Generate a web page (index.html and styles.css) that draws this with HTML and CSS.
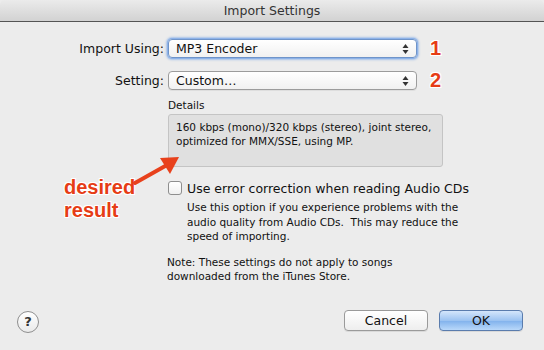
FILE: index.html
```html
<!DOCTYPE html>
<html>
<head>
<meta charset="utf-8">
<link rel="stylesheet" href="styles.css">
</head>
<body>
<div class="dialog">
  <div class="titlebar">Import Settings</div>
  <div class="content">
    <div class="form">
      <div class="label">Import Using:</div>
      <div class="popup focused"><span>MP3 Encoder</span><span class="updown"><svg width="7" height="12" viewBox="0 0 7 12"><path d="M3.5 1 L6.5 5 H0.5 Z M3.5 11 L6.5 7 H0.5 Z" fill="#333"/></svg></span></div>
      <div class="num">1</div>
      <div class="label">Setting:</div>
      <div class="popup"><span>Custom…</span><span class="updown"><svg width="7" height="12" viewBox="0 0 7 12"><path d="M3.5 1 L6.5 5 H0.5 Z M3.5 11 L6.5 7 H0.5 Z" fill="#333"/></svg></span></div>
      <div class="num">2</div>
    </div>
    <div class="details">
      <div class="details-label">Details</div>
      <div class="details-box">160 kbps (mono)/320 kbps (stereo), joint stereo,<br>optimized for MMX/SSE, using MP.</div>
    </div>
    <div class="option">
      <div class="check-row"><span class="checkbox"></span><span class="check-label">Use error correction when reading Audio CDs</span></div>
      <div class="option-desc">Use this option if you experience problems with the<br>audio quality from Audio CDs.&nbsp; This may reduce the<br>speed of importing.</div>
    </div>
    <div class="note">Note: These settings do not apply to songs<br>downloaded from the iTunes Store.</div>
  </div>
  <div class="footer">
    <div class="help">?</div>
    <div class="buttons">
      <div class="btn">Cancel</div>
      <div class="btn default">OK</div>
    </div>
  </div>
  <div class="annotation">desired<br>result</div>
  <svg class="arrow" width="60" height="40" viewBox="0 0 60 40">
    <path d="M8 29 L40 11" stroke="#e8411c" stroke-width="4" stroke-linecap="round" fill="none"/>
    <path d="M52 3 L33 4 L43 20 Z" fill="#e8411c"/>
  </svg>
</div>
</body>
</html>
```
FILE: styles.css
```css
* { box-sizing: border-box; }
html, body { margin: 0; padding: 0; }
body {
  width: 544px;
  height: 350px;
  background: #ececec;
  font-family: "DejaVu Sans", "Liberation Sans", sans-serif;
  color: #111;
  overflow: hidden;
}
.dialog {
  position: relative;
  width: 544px;
  height: 350px;
  background: #ececec;
  display: flex;
  flex-direction: column;
}
.titlebar {
  height: 22px;
  line-height: 22px;
  text-align: center;
  font-size: 12.5px;
  color: #333;
  background: linear-gradient(#ebebeb, #d2d2d2);
  border-bottom: 1px solid #545454;
  border-radius: 5px 5px 0 0;
}
.content {
  flex: 1;
  padding-top: 17px;
}
.form {
  display: grid;
  grid-template-columns: 168px 249px 1fr;
  row-gap: 13px;
  align-items: center;
}
.label {
  text-align: right;
  padding-right: 4px;
  font-size: 12.5px;
}
.popup {
  height: 19px;
  border: 1px solid #9c9c9c;
  border-radius: 4px;
  background: linear-gradient(#ffffff, #f1f1f1);
  font-size: 12.5px;
  display: flex;
  align-items: center;
  justify-content: space-between;
  padding: 0 7px 0 7px;
  box-shadow: 0 1px 0 rgba(0,0,0,0.06);
}
.popup.focused {
  border-color: #6f94c9;
  box-shadow: 0 0 0 1px #8db2e8, 0 0 2px 2px rgba(120,165,230,0.6);
}
.updown { display: flex; align-items: center; }
.num {
  padding-left: 13px;
  font-family: "Liberation Sans", sans-serif;
  font-weight: bold;
  font-size: 20px;
  color: #e63c15;
  text-shadow: 1px 1px 0 #fff, -1px -1px 0 #fff, 1px -1px 0 #fff, -1px 1px 0 #fff;
  line-height: 19px;
}
.details {
  margin: 9px 0 0 168px;
  width: 275px;
}
.details-label {
  font-size: 10.5px;
  line-height: 13px;
  margin-bottom: 2px;
}
.details-box {
  height: 53px;
  background: #e0e0e0;
  border: 1px solid #c4c4c4;
  border-radius: 3px;
  font-size: 10.5px;
  line-height: 14px;
  padding: 5px 7px;
  white-space: nowrap;
}
.option {
  margin: 13px 0 0 168px;
}
.check-row {
  display: flex;
  align-items: center;
  height: 16px;
}
.checkbox {
  width: 14px;
  height: 14px;
  border: 1px solid #8e8e8e;
  border-radius: 3px;
  background: linear-gradient(#fff, #f0f0f0);
  margin-right: 5px;
}
.check-label {
  font-size: 12.5px;
}
.option-desc {
  margin: 4px 0 0 19px;
  font-size: 10.5px;
  line-height: 14.5px;
  white-space: nowrap;
}
.note {
  margin: 11px 0 0 167px;
  font-size: 10.5px;
  line-height: 14px;
}
.footer {
  height: 40px;
  display: flex;
  align-items: flex-start;
  justify-content: space-between;
  padding: 0 21px 0 17px;
}
.help {
  width: 22px;
  height: 22px;
  border-radius: 50%;
  border: 1px solid #8f8f8f;
  background: linear-gradient(#fff, #eaeaea);
  text-align: center;
  line-height: 20px;
  font-size: 13px;
  font-weight: bold;
  color: #333;
  margin-top: 1px;
}
.buttons {
  display: flex;
  gap: 11px;
}
.btn {
  width: 84px;
  height: 21px;
  border: 1px solid #9a9a9a;
  border-radius: 4px;
  background: linear-gradient(#ffffff, #eeeeee);
  text-align: center;
  line-height: 19px;
  font-size: 12.5px;
  box-shadow: 0 1px 0 rgba(0,0,0,0.08);
}
.btn.default {
  border-color: #5a7cad;
  background: linear-gradient(#d4e6fb, #9cc3f1 50%, #80b1ec 51%, #b9d8fa);
}
.annotation {
  position: absolute;
  left: 64px;
  top: 176px;
  font-family: "Liberation Sans", sans-serif;
  font-weight: bold;
  font-size: 20px;
  line-height: 23px;
  color: #e63c15;
  text-shadow: 1px 1px 0 #fff, -1px -1px 0 #fff, 1px -1px 0 #fff, -1px 1px 0 #fff;
}
.arrow {
  position: absolute;
  left: 127px;
  top: 154px;
}
```
